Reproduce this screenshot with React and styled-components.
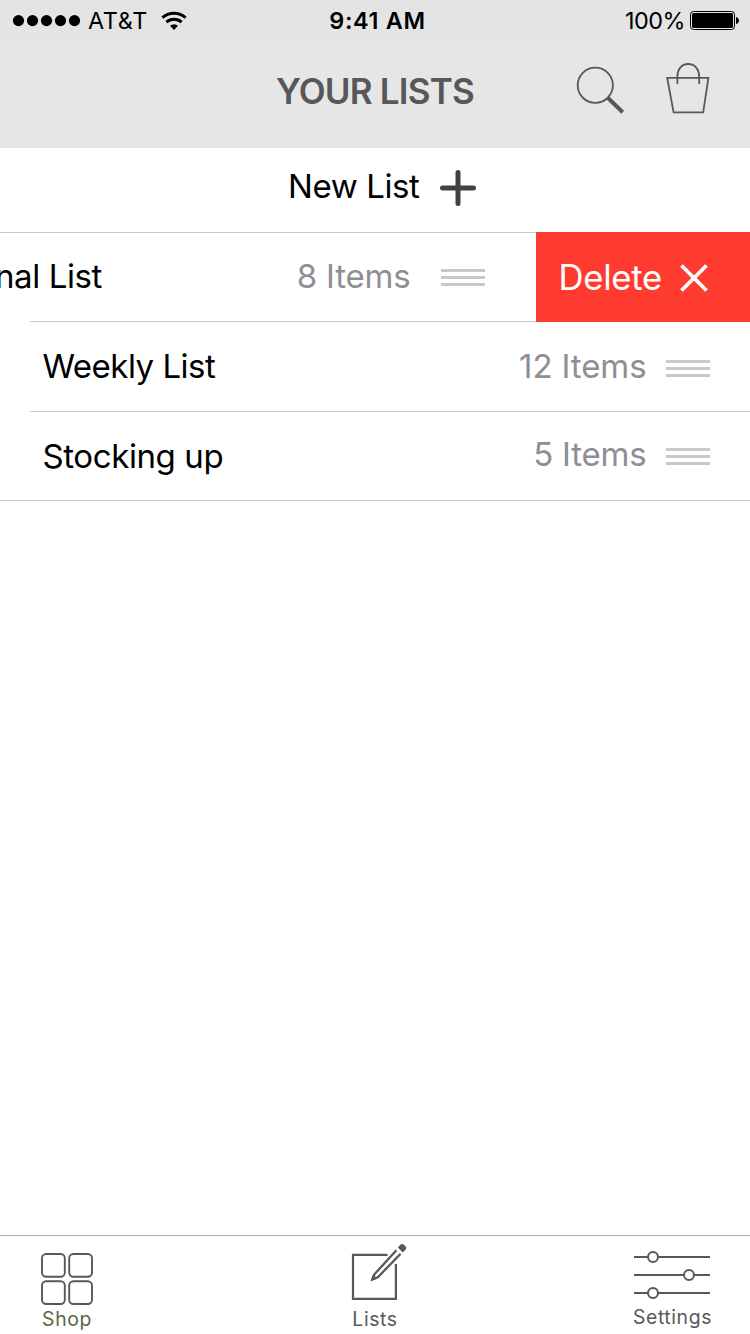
import React from 'react'
import styled, { createGlobalStyle } from 'styled-components'

const ink = '#58585a'
const line = '#c7c7cc'

const GlobalStyle = createGlobalStyle`
  body {
    margin: 0;
    background: white;
    font-family: Inter, 'Liberation Sans', sans-serif;
  }
`

const Screen = styled.div`
  display: flex;
  flex-direction: column;
  width: 750px;
  height: 1334px;
  overflow: hidden;
  background: white;
`

const Icon = styled.svg`
  display: block;
  flex: none;
  overflow: visible;
`

const Text = styled.span`
  display: block;
  flex: none;
  white-space: pre;
  line-height: 1;
  font-size: ${p => p.$size}px;
  font-weight: ${p => p.$weight || 400};
  letter-spacing: ${p => p.$spacing || 0}px;
  color: ${p => p.$color || 'black'};
`

const StatusBar = styled.div`
  display: grid;
  grid-template-columns: 1fr auto 1fr;
  align-items: center;
  height: 40px;
  padding: 1px 11px 0 12px;
  box-sizing: border-box;
  background: #e4e4e4;
`

const StatusGroup = styled.div`
  display: flex;
  align-items: center;
  justify-content: ${p => p.$end ? 'flex-end' : 'flex-start'};
`

const Carrier = styled(Text)`
  margin: 0 13px 0 8px;
`

const Clock = styled(Text)`
  padding-left: 4px;
`

const Charge = styled(Text)`
  margin-right: 5px;
`

const Header = styled.header`
  display: grid;
  grid-template-columns: 1fr auto 1fr;
  align-items: center;
  height: 108px;
  padding: 0 40px 5px;
  box-sizing: border-box;
  background: #e6e6e6;
`

const Actions = styled.div`
  grid-column: 3;
  display: flex;
  justify-content: flex-end;
  gap: 42px;
  padding-bottom: 5px;
`

const Title = styled(Text)`
  grid-column: 2;
`

const NewList = styled.div`
  display: flex;
  align-items: center;
  height: 85px;
  padding: 0 274px 5px 288px;
  justify-content: space-between;
  box-sizing: border-box;
  border-bottom: 1px solid ${line};
`

const NewListLabel = styled(Text)`
  padding-bottom: 3px;
`

const Row = styled.div`
  display: flex;
  align-items: center;
  height: ${p => p.$height}px;
  box-sizing: border-box;
  margin-left: ${p => p.$inset}px;
  padding-left: ${p => 42.5 - p.$inset}px;
  padding-right: ${p => p.$swiped ? 0 : 40}px;
  border-bottom: 1px solid ${line};
`

const Name = styled(Text)`
  margin-right: auto;
`

const Count = styled(Text)`
  margin-right: ${p => p.$gap}px;
  padding-bottom: ${p => p.$lift}px;
`

// the swiped row keeps its text, only pushed out past the left edge
const SwipedName = styled(Name)`
  margin-left: -47.5px;
  padding-bottom: 2px;
`

const DeleteButton = styled.div`
  display: flex;
  align-items: center;
  justify-content: space-between;
  align-self: flex-start;
  width: 214px;
  height: 90px;
  margin: -1px 0 -1px 51px;
  padding: 1px 42px 0 22.5px;
  box-sizing: border-box;
  background: #ff3b30;
`

const TabBar = styled.nav`
  display: grid;
  grid-template-columns: 1fr auto 1fr;
  height: 99px;
  margin-top: auto;
  padding: 0 38px 0 40px;
  box-sizing: border-box;
  border-top: 1px solid #adadad;
`

const Tab = styled.div`
  display: flex;
  flex-direction: column;
  align-items: center;
  justify-self: ${p => p.$align || 'center'};
  padding-right: ${p => p.$nudge || 0}px;
`

const TabLabel = styled(Text)`
  margin-top: ${p => p.$top}px;
`

const HandleIcon = styled(Icon)`
  margin-top: ${p => p.$drop || 0}px;
`

const Handle = ({ drop }) => (
  <HandleIcon $drop={drop} width='44' height='17' viewBox='0 0 44 17' fill={line}>
    <rect width='44' height='3' />
    <rect y='7' width='44' height='3' />
    <rect y='14' width='44' height='3' />
  </HandleIcon>
)

const Signal = () => (
  <Icon width='68' height='12' viewBox='0 0 68 12'>
    {[6.5, 20.5, 34.5, 48.5, 62.5].map(x => <circle key={x} cx={x} cy='5.6' r='5.6' />)}
  </Icon>
)

const Wifi = () => (
  <Icon width='26' height='18' viewBox='0 0 26 18' fill='none' stroke='black' strokeWidth='3'>
    <path d='M1.4 5.6a17.5 17.5 0 0 1 23.2 0' />
    <path d='M5.4 10.2a11.3 11.3 0 0 1 15.2 0' />
    <path d='M13 18l-4-4.2a5.9 5.9 0 0 1 8 0z' fill='black' stroke='none' />
  </Icon>
)

const Battery = () => (
  <Icon width='49' height='19' viewBox='0 0 49 19'>
    <rect x='0.5' y='0.5' width='44' height='18' rx='3' fill='none' stroke='black' />
    <rect x='2' y='2' width='41' height='15' rx='1.5' />
    <path d='M46 6c4 1 4 6 0 7z' />
  </Icon>
)

const SearchIcon = () => (
  <Icon width='47' height='52' viewBox='577 63 47 52' fill='none' stroke={ink}>
    <circle cx='595.3' cy='85.3' r='17.6' strokeWidth='1.8' />
    <path d='M607.5 97.5l15.2 14.8' strokeWidth='4' />
  </Icon>
)

const BagIcon = () => (
  <Icon width='44' height='52' viewBox='666 63 44 52' fill='none' stroke={ink} strokeWidth='1.8'>
    <path d='M667.2 77.9h41.2l-5.2 34.4h-29.6z' />
    <path d='M677.4 84v-7.5c0-7 4-12.5 10.8-12.5s11 5.5 11 12.5V84' />
  </Icon>
)

const PlusIcon = () => (
  <Icon width='36' height='36' viewBox='0 0 36 36' stroke='#414141' strokeWidth='5' strokeLinecap='round'>
    <path d='M18 2.5v31M2.5 18h31' />
  </Icon>
)

const CrossIcon = () => (
  <Icon width='28' height='28' viewBox='0 0 28 28' stroke='white' strokeWidth='3.8'>
    <path d='M1.5 1.5l25 25M26.5 1.5l-25 25' />
  </Icon>
)

const ShopIcon = () => (
  <Icon width='54' height='70' viewBox='40 1236 54 70' fill='none' stroke={ink} strokeWidth='1.9'>
    {[42, 69.2].map(x => [1254, 1281.2].map(y => (
      <rect key={`${x}-${y}`} x={x} y={y} width='22.8' height='22.8' rx='4.2' />
    )))}
  </Icon>
)

const ListsIcon = () => (
  <Icon width='46' height='70' viewBox='352 1236 46 70' fill='none' stroke={ink} strokeWidth='2.2'>
    <path d='M387.5 1254.9H353v44h42.9V1264' />
    <path d='M396.4 1250.3l-22 24-2 5.1 5.4-2.1 22.8-23.6' strokeWidth='2.3' />
    <path d='M370.8 1281l2-6.5 4.8 4z' fill={ink} stroke='none' />
    <path d='M397.8 1247.4l2.6-2.6c1-1 2.5-1 3.5 0l1.5 1.5c1 1 1 2.5 0 3.5l-2.6 2.6z' fill={ink} stroke='none' />
  </Icon>
)

const SettingsIcon = () => (
  <Icon width='76' height='70' viewBox='634 1236 76 70' fill='white' stroke={ink} strokeWidth='2'>
    <path d='M634 1257h76M634 1275h76M634 1293h76' />
    <circle cx='653' cy='1257' r='5' />
    <circle cx='689' cy='1275' r='5' />
    <circle cx='653' cy='1293' r='5' />
  </Icon>
)

const App = () => (
  <>
    <GlobalStyle />
    <Screen>
      <StatusBar>
        <StatusGroup>
          <Signal />
          <Carrier $size={23.4} $spacing={0.7}>AT&T</Carrier>
          <Wifi />
        </StatusGroup>
        <Clock $size={23.4} $weight={600} $spacing={0.7}>9:41 AM</Clock>
        <StatusGroup $end>
          <Charge $size={23.4} $spacing={-0.5}>100%</Charge>
          <Battery />
        </StatusGroup>
      </StatusBar>
      <Header>
        <Title $size={35} $weight={600} $spacing={-0.8} $color={ink}>YOUR LISTS</Title>
        <Actions>
          <SearchIcon />
          <BagIcon />
        </Actions>
      </Header>
      <NewList>
        <NewListLabel $size={33} $spacing={-0.4}>New List</NewListLabel>
        <PlusIcon />
      </NewList>
      <Row $height={89} $inset={30} $swiped>
        <SwipedName $size={33} $spacing={-0.4}>nal List</SwipedName>
        <Count $size={33} $gap={30.5} $lift={2} $spacing={-0.2} $color='#8e8e93'>8 Items</Count>
        <Handle />
        <DeleteButton>
          <Text $size={34.7} $spacing={-0.3} $color='white'>Delete</Text>
          <CrossIcon />
        </DeleteButton>
      </Row>
      <Row $height={90} $inset={30}>
        <Name $size={33} $spacing={-0.5}>Weekly List</Name>
        <Count $size={33} $gap={19.5} $lift={0} $spacing={-0.1} $color='#8e8e93'>12 Items</Count>
        <Handle drop={4} />
      </Row>
      <Row $height={89} $inset={0}>
        <Name $size={33} $spacing={-0.4}>Stocking up</Name>
        <Count $size={33} $gap={19.5} $lift={4} $spacing={-0.2} $color='#8e8e93'>5 Items</Count>
        <Handle />
      </Row>
      <TabBar>
        <Tab $align='start'>
          <ShopIcon />
          <TabLabel $size={19.4} $spacing={0.6} $top={4} $color='#5a6840'>Shop</TabLabel>
        </Tab>
        <Tab $nudge={2}>
          <ListsIcon />
          <TabLabel $size={19.4} $spacing={0.6} $top={4} $color={ink}>Lists</TabLabel>
        </Tab>
        <Tab $align='end'>
          <SettingsIcon />
          <TabLabel $size={19.4} $spacing={0.6} $top={2} $color={ink}>Settings</TabLabel>
        </Tab>
      </TabBar>
    </Screen>
  </>
)

export default App
